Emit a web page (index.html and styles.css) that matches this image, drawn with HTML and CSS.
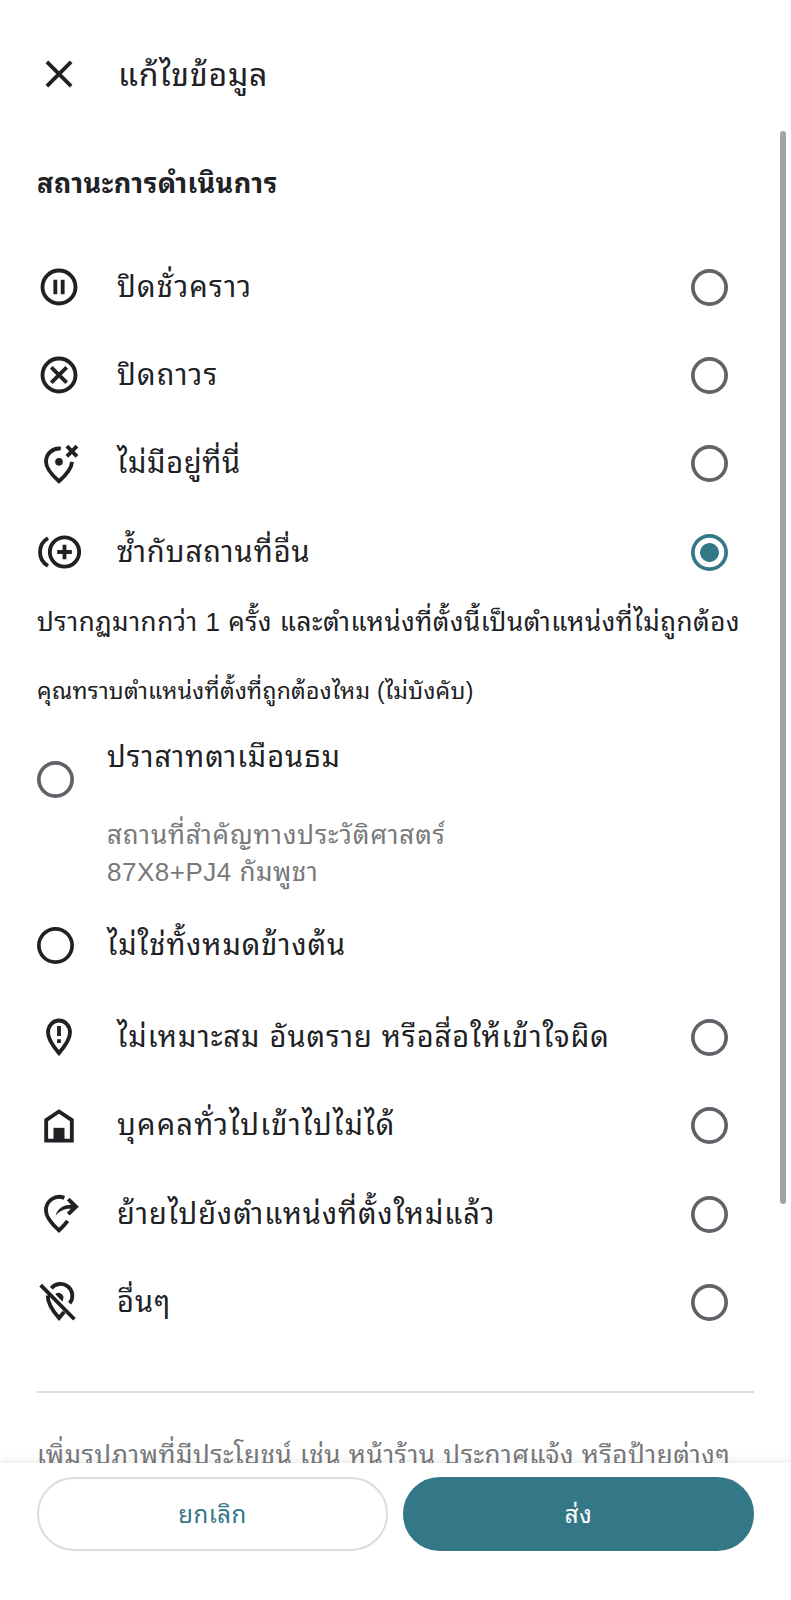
FILE: index.html
```html
<!DOCTYPE html>
<html lang="th">
<head>
    <meta charset="UTF-8">
    <meta name="viewport" content="width=device-width, initial-scale=1.0">
    <title>แก้ไขข้อมูล</title>
    <link rel="stylesheet" href="styles.css">
</head>
<body>
    <div class="header">
        <svg class="icon" viewBox="0 0 24 24"><path d="M5.4 5.4l13.2 13.2M18.6 5.4L5.4 18.6"/></svg>
        <h1 class="title">แก้ไขข้อมูล</h1>
    </div>

    <div class="content">
        <h2 class="section-title">สถานะการดำเนินการ</h2>

        <div class="option">
            <svg class="icon" viewBox="0 0 24 24"><circle cx="12" cy="12" r="9"/><path d="M10 8v8M14 8v8"/></svg>
            <span class="label wide">ปิดชั่วคราว</span>
            <span class="radio"></span>
        </div>
        <div class="option">
            <svg class="icon" viewBox="0 0 24 24"><circle cx="12" cy="12" r="9"/><path d="M7.8 7.8l8.4 8.4M16.2 7.8l-8.4 8.4"/></svg>
            <span class="label wide">ปิดถาวร</span>
            <span class="radio"></span>
        </div>
        <div class="option">
            <svg class="icon" viewBox="0 0 24 24"><path d="M13 3.6A7.2 7.2 0 0 0 4.9 10.7C4.9 14.1 7.3 17.3 12 21.4C16.4 17.5 18.8 14.3 19.1 10.8"/><circle class="fill" cx="12" cy="10.8" r="2.1"/><path d="M16.3 2.3l5.5 5.5M21.8 2.3l-5.5 5.5"/></svg>
            <span class="label tight">ไม่มีอยู่ที่นี่</span>
            <span class="radio"></span>
        </div>
        <div class="option">
            <svg class="icon" viewBox="0 0 24 24"><circle cx="15" cy="12" r="8"/><path d="M15 8v8M11 12h8M6 4.4a8.8 8.8 0 0 0 0 15.2"/></svg>
            <span class="label">ซ้ำกับสถานที่อื่น</span>
            <span class="radio checked"></span>
        </div>

        <div class="duplicate">
            <p class="hint">ปรากฏมากกว่า 1 ครั้ง และตำแหน่งที่ตั้งนี้เป็นตำแหน่งที่ไม่ถูกต้อง</p>
            <p class="question">คุณทราบตำแหน่งที่ตั้งที่ถูกต้องไหม (ไม่บังคับ)</p>
            <div class="place">
                <span class="radio"></span>
                <div>
                    <div class="place-name">ปราสาทตาเมือนธม</div>
                    <div class="place-detail">สถานที่สำคัญทางประวัติศาสตร์</div>
                    <div class="place-detail code">87X8+PJ4 กัมพูชา</div>
                </div>
            </div>
            <div class="place none">
                <span class="radio dark"></span>
                <div class="place-name">ไม่ใช่ทั้งหมดข้างต้น</div>
            </div>
        </div>

        <div class="option">
            <svg class="icon" viewBox="0 0 24 24"><path d="M12 3a6 6.600 0 0 0-6 6.600c0 3.500 2 6.600 6 11.200c4-4.600 6-7.700 6-11.200A6 6.600 0 0 0 12 3z"/><path d="M12 6v5.500M12 13.200v2.100"/></svg>
            <span class="label">ไม่เหมาะสม อันตราย หรือสื่อให้เข้าใจผิด</span>
            <span class="radio"></span>
        </div>
        <div class="option">
            <svg class="icon" viewBox="0 0 24 24"><path d="M5 20V8.800l7-4.700l7 4.700V20z"/><path class="fill" d="M9 13h6v7.500H9z"/></svg>
            <span class="label wide">บุคคลทั่วไปเข้าไปไม่ได้</span>
            <span class="radio"></span>
        </div>
        <div class="option">
            <svg class="icon" viewBox="0 0 24 24"><path d="M14.900 3.200A7.200 7.200 0 0 0 4.900 10.200C4.900 13.600 7.300 16.700 12 20.900C14 19 15.400 17.500 16.700 15.700"/><path class="fill" d="M10.200 12.800C11.200 9.300 14 7.100 18.600 7L16.300 4.700L17.800 3.200L22.800 8L17.800 12.800L16.300 11.300L18.400 9.200C15 9 12.500 10.400 10.200 12.800z"/></svg>
            <span class="label">ย้ายไปยังตำแหน่งที่ตั้งใหม่แล้ว</span>
            <span class="radio"></span>
        </div>
        <div class="option">
            <svg class="icon" viewBox="0 0 24 24"><path d="M2 2.800l18.400 18.600M7.800 4.500A6.300 6.300 0 0 1 17.800 12.700M5.800 8.500C5.800 12.500 8.500 16.800 12 20.700L14.800 17.400"/><path class="fill" d="M10 7.800a2.600 2.600 0 0 1 4.300 2.600q0 .8-.5 1.300z"/></svg>
            <span class="label">อื่นๆ</span>
            <span class="radio"></span>
        </div>

        <div class="photos">เพิ่มรูปภาพที่มีประโยชน์ เช่น หน้าร้าน ประกาศแจ้ง หรือป้ายต่างๆ</div>
        <div class="scrollbar"></div>
    </div>

    <div class="footer">
        <button class="button cancel">ยกเลิก</button>
        <button class="button submit">ส่ง</button>
    </div>
</body>
</html>
```
FILE: styles.css
```css
* {
    box-sizing: border-box;
}

body {
    margin: 0;
    height: 1600px;
    display: flex;
    flex-direction: column;
    overflow: hidden;
    background-color: #fff;
    color: #202124;
    font-family: "Liberation Sans", "Noto Sans Thai Looped", "Loma", "Noto Sans Thai", sans-serif;
    font-size: 29px;
}

h1, h2, p {
    margin: 0;
    font-weight: normal;
    white-space: nowrap;
}

.header {
    height: 130px;
    padding: 18px 37px 0;
    display: flex;
    align-items: center;
    gap: 37px;
}

.icon {
    width: 44px;
    height: 44px;
    flex: none;
    overflow: visible;
    fill: none;
    stroke: #202124;
    stroke-width: 2.1;
}

.icon .fill {
    fill: #202124;
    stroke: none;
}

.title {
    padding-top: 2px;
    font-size: 32px;
    line-height: 44px;
    letter-spacing: 0.8px;
}

.content {
    position: relative;
    height: 1333px;
    overflow: hidden;
}

.section-title {
    height: 113px;
    padding: 32px 37px 0;
    font-size: 27px;
    line-height: 44px;
    font-weight: bold;
    letter-spacing: 0.5px;
}

.option {
    height: 88.33px;
    padding: 0 63px 0 37px;
    display: flex;
    align-items: center;
    gap: 36px;
}

.label {
    flex: 1;
    padding-bottom: 1px;
    line-height: 44px;
    letter-spacing: 1px;
    white-space: nowrap;
}

.label.wide {
    letter-spacing: 1.25px;
}

.label.tight {
    letter-spacing: 0.7px;
}

.radio {
    width: 37px;
    height: 37px;
    flex: none;
    border-radius: 50%;
    box-shadow: inset 0 0 0 3.7px #5f6368;
}

.radio.checked {
    box-shadow: inset 0 0 0 3.7px #347887;
    background: radial-gradient(circle, #347887 9px, transparent 9.7px);
}

.radio.dark {
    box-shadow: inset 0 0 0 3.7px #202124;
}

.duplicate {
    height: 397px;
    padding: 0 37px;
}

.hint {
    padding-top: 4px;
    line-height: 44px;
    font-size: 26px;
    letter-spacing: 0.54px;
}

.question {
    padding-top: 25px;
    line-height: 44px;
    font-size: 23px;
    letter-spacing: 0.28px;
}

.place {
    display: flex;
    gap: 33px;
    margin-top: 22px;
    white-space: nowrap;
}

.place .radio {
    margin-top: 26px;
}

.place-name {
    line-height: 44px;
    margin-bottom: 38px;
    letter-spacing: 0.95px;
}

.place-detail {
    font-size: 26px;
    line-height: 37px;
    letter-spacing: 0.85px;
    color: #77797c;
}

.place-detail.code {
    letter-spacing: 0.5px;
}

.place.none {
    margin-top: 32px;
}

.place.none .radio {
    margin-top: 4px;
}

.photos {
    margin: 44px 37px 0;
    padding-top: 40px;
    border-top: 2px solid #dadce0;
    line-height: 44px;
    font-size: 26px;
    letter-spacing: 0.52px;
    color: #77797c;
    white-space: nowrap;
}

.scrollbar {
    position: absolute;
    top: 1px;
    right: 5px;
    width: 6px;
    height: 1073px;
    border-radius: 3px;
    background-color: #a3a3a3;
}

.footer {
    flex: 1;
    position: relative;
    display: flex;
    gap: 15px;
    padding: 14px 37px 0;
    background-color: #fff;
    box-shadow: 0 -1px 10px rgba(0, 0, 0, 0.1);
}

.button {
    flex: 1;
    height: 74px;
    padding: 0 0 4px;
    border: 2px solid #dadce0;
    border-radius: 37px;
    background-color: #fff;
    color: #347887;
    font-family: inherit;
    font-size: 24px;
    letter-spacing: 0.5px;
}

.button.submit {
    border-color: #347887;
    background-color: #347887;
    color: #fff;
}
```
